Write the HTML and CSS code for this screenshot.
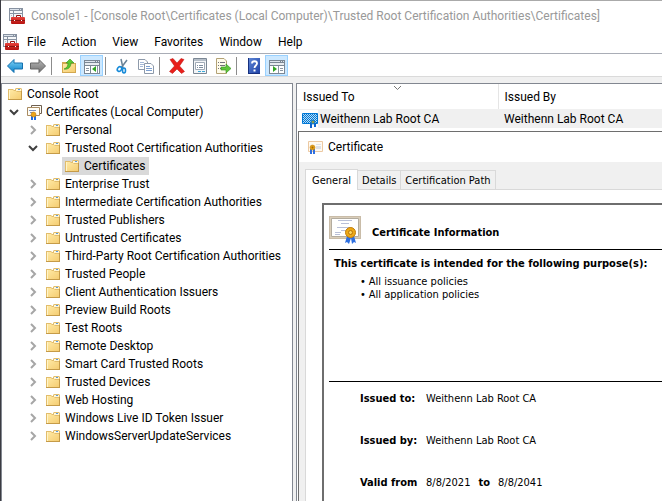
FILE: index.html
```html
<!DOCTYPE html>
<html lang="en">
<head>
    <meta charset="UTF-8">
    <meta name="viewport" content="width=device-width, initial-scale=1.0">
    <title>Console1</title>
    <link rel="stylesheet" href="styles.css">
</head>
<body>
    <!-- Shared icons -->
    <svg class="sprite" aria-hidden="true">
        <defs>
            <linearGradient id="folderFill" x1="0" y1="0" x2="1" y2="1">
                <stop offset="0" stop-color="#ffeaa6"/><stop offset="1" stop-color="#f5cd72"/>
            </linearGradient>
            <linearGradient id="blueFill" x1="0" y1="0" x2="0" y2="1">
                <stop offset="0" stop-color="#7fd4f8"/><stop offset="1" stop-color="#0a7fc8"/>
            </linearGradient>
            <linearGradient id="grayFill" x1="0" y1="0" x2="0" y2="1">
                <stop offset="0" stop-color="#b8b8b8"/><stop offset="1" stop-color="#707070"/>
            </linearGradient>
            <linearGradient id="redFill" x1="0" y1="0" x2="0" y2="1">
                <stop offset="0" stop-color="#e8413a"/><stop offset="1" stop-color="#b4120f"/>
            </linearGradient>
            <linearGradient id="helpFill" x1="0" y1="0" x2="1" y2="1">
                <stop offset="0" stop-color="#6088d8"/><stop offset="1" stop-color="#1c3fa4"/>
            </linearGradient>
            <pattern id="dither" width="2" height="2" patternUnits="userSpaceOnUse">
                <path fill="#b9dcf4" d="M0 0h2v2H0z"/><path fill="#0078d7" d="M0 0h1v1H0zM1 1h1v1H1z"/>
            </pattern>
        </defs>
        <symbol id="folder" viewBox="0 0 16 16">
            <path fill="#e2bd6c" d="M1 3h5l1 1h1V3l1-1h5l1 1v11H1z"/>
            <path fill="#fff6d6" d="M9 3h5v2H9z"/>
            <path fill="#5b9bdc" d="M11 3h2v1h-2z"/>
            <path fill="url(#folderFill)" d="M2 4h4l1 1h2l1 1h4v7H2z"/>
            <path fill="#fff4c8" d="M2 4h1v9H2z"/>
            <path fill="#c59b48" d="M1 13h14v1H1zM14 5h1v9h-1z"/>
        </symbol>
        <symbol id="chevron-right" viewBox="0 0 10 10">
            <path fill="none" stroke="#a6a6a6" stroke-width="2" d="M3 1l4 4-4 4"/>
        </symbol>
        <symbol id="chevron-down" viewBox="0 0 10 10">
            <path fill="none" stroke="#404040" stroke-width="2" d="M1 3l4 4 4-4"/>
        </symbol>
        <symbol id="console" viewBox="0 0 16 16">
            <path fill="#8792a1" d="M0 0h14v13H0z"/>
            <path fill="#dce3eb" d="M1 1h9v1H1zM11 1h1v1h-1z"/>
            <path fill="#f4f6f8" d="M1 3h12v9H1z"/>
            <path fill="#8792a1" d="M4 3h1v9H4zM1 5h12v1H1z"/>
            <path fill="#b7c0cb" d="M2 7h1v1H2zM2 9h1v1H2z"/>
            <path fill="none" stroke="#8e1512" d="M7.500 9V7.500h4V9"/>
            <rect x="2" y="9" width="14" height="7" rx="1" fill="url(#redFill)"/>
            <path fill="#8e1512" d="M2 12h14v1H2z"/>
            <path fill="#fff" d="M5 12h1v1H5zM12 12h1v1h-1z"/>
        </symbol>
        <symbol id="certs" viewBox="0 0 16 16">
            <path fill="#fffdf6" stroke="#6e5f50" d="M5.500 1.500h10v8h-10z"/>
            <path fill="#fffdf6" stroke="#a98b62" d="M1.500 3.500h12v8h-12z"/>
            <path fill="#7f92c0" d="M3 6h7v1H3zM4 8h4v1H4z"/>
            <path fill="#1f6be0" d="M5 12h2v4H5zM8 12h2v4H8z"/>
            <circle cx="7.500" cy="10.500" r="2.500" fill="#eba51c" stroke="#b87508" stroke-width=".5"/>
        </symbol>
        <symbol id="cert-small" viewBox="0 0 16 16">
            <path fill="#fffaf2" stroke="#ecc9a2" d="M1.500 2.500h14v10h-14z"/>
            <path fill="#dde1e8" d="M9 5h5v1H9zM9 7h5v3H9z"/>
            <path fill="#2f6fe0" d="M3 10h2v5H3zM6 10h2v5H6z"/>
            <circle cx="5.500" cy="8.500" r="2.500" fill="#e3a21a" stroke="#bb7a08" stroke-width=".5"/>
            <circle cx="5.500" cy="8.500" r="1" fill="#a96a05"/>
        </symbol>
        <symbol id="cert-selected" viewBox="0 0 16 16">
            <path fill="url(#dither)" stroke="#0078d7" d="M.5 1.500h15v10H.5z"/>
            <path fill="#0a63cf" d="M8 11h2v5H8zM12 11h2v4h-2z"/>
            <circle cx="11" cy="10" r="2" fill="#8c9a4c" stroke="#0078d7"/>
        </symbol>
        <symbol id="arrow" viewBox="0 0 16 16">
            <path stroke-width="1" stroke-linejoin="round" d="M.500 8L7 1.500V5h8.500v6H7v3.500z"/>
        </symbol>
        <symbol id="pane" viewBox="0 0 16 14">
            <path fill="#7b8794" d="M0 0h16v14H0z"/>
            <path fill="#dfe6ee" d="M1 1h10v1H1zM12 1h1v1h-1zM14 1h1v1h-1z"/>
            <path fill="#e7ebef" d="M1 3h14v2H1z"/>
            <path fill="#fff" d="M1 6h5v7H1zM7 6h8v7H7z"/>
        </symbol>
    </svg>

    <div class="window">
        <header class="title-bar">
            <svg class="icon"><use href="#console"/></svg>
            <h1>Console1 - [Console Root\Certificates (Local Computer)\Trusted Root Certification Authorities\Certificates]</h1>
        </header>

        <nav class="menu-bar">
            <svg class="icon"><use href="#console"/></svg>
            <button>File</button>
            <button>Action</button>
            <button>View</button>
            <button>Favorites</button>
            <button>Window</button>
            <button>Help</button>
        </nav>

        <div class="toolbar">
            <button aria-label="Back"><svg class="icon" fill="url(#blueFill)" stroke="#1470ae"><use href="#arrow"/></svg></button>
            <button aria-label="Forward"><svg class="icon flip" fill="url(#grayFill)" stroke="#666"><use href="#arrow"/></svg></button>
            <span class="separator"></span>
            <button aria-label="Up one level">
                <svg class="icon" viewBox="0 0 16 16">
                    <path fill="#d3a850" d="M1 4h5l1 1h8v10H1z"/>
                    <path fill="url(#folderFill)" d="M2 6h12v8H2z"/>
                    <path fill="#5cc832" stroke="#2f8f1c" stroke-width=".6" d="M3 11c3-1 4-3 4-6H5l4-4 4 4h-3c0 4-3 7-7 6z"/>
                </svg>
            </button>
            <button class="active" aria-label="Show console tree" aria-pressed="true">
                <svg class="icon" viewBox="0 0 16 16">
                    <use href="#pane" y="2" width="16" height="14"/>
                    <path fill="#8b96a3" d="M2 10h3v1H2zM2 12h3v1H2zM13 8h1v7h-1z"/>
                    <path fill="#30a423" d="M12 8v6l-4-3z"/>
                </svg>
            </button>
            <span class="separator"></span>
            <button aria-label="Cut">
                <svg class="icon" viewBox="0 0 16 16">
                    <path fill="none" stroke="#698296" stroke-width="1.500" d="M6 1l2 9M12 2l-6 8"/>
                    <ellipse cx="4.500" cy="11" rx="2" ry="2.500" fill="none" stroke="#168ad8" stroke-width="1.600" transform="rotate(35 4.500 11)"/>
                    <ellipse cx="9" cy="12.500" rx="1.500" ry="2.500" fill="none" stroke="#168ad8" stroke-width="1.600"/>
                </svg>
            </button>
            <button aria-label="Copy">
                <svg class="icon" viewBox="0 0 16 16">
                    <path fill="#fff" stroke="#8e9aaa" d="M.5 1.500H7L9.500 4v7.500H.5z"/>
                    <path stroke="#a5b9d8" d="M2 4.500h4M2 6.500h4M2 8.500h3"/>
                    <path fill="#fff" stroke="#8e9aaa" d="M6.500 5.500H13l2.500 2.500v7.500h-9z"/>
                    <path fill="none" stroke="#7da0d0" d="M8 8.500h4M8 10.500h6M8 12.500h6"/>
                </svg>
            </button>
            <span class="separator"></span>
            <button aria-label="Delete">
                <svg class="icon" viewBox="0 0 16 16">
                    <path fill="#e81f1b" stroke="#b8100d" stroke-width=".5" d="M1 1.500l3-1 4 4.500 4-4.500 3 1L10.500 8l5 5.500-3 2L8 11l-4.500 4.500-3-2L5.500 8z"/>
                </svg>
            </button>
            <button aria-label="Properties">
                <svg class="icon" viewBox="0 0 16 16">
                    <path fill="#f3f5f7" stroke="#7b8794" d="M1.500 .5h13v15h-13z"/>
                    <path fill="#b5bec8" d="M2 1h12v2H2z"/>
                    <path fill="#fff" stroke="#a0aab6" d="M3.500 4.500h9v7h-9z"/>
                    <path stroke="#7d8d9f" d="M5 7.500h1M7 7.500h4M5 9.500h1M7 9.500h4"/>
                    <path stroke="#3ca8d8" d="M6 13.500h3M10 13.500h3"/>
                </svg>
            </button>
            <button aria-label="Export list">
                <svg class="icon" viewBox="0 0 16 16">
                    <path fill="#fffbea" stroke="#b3a276" d="M1.500 .5H9L11.500 3v12.500h-10z"/>
                    <path stroke="#75737a" stroke-dasharray="1 1 5" d="M3 4.500h7M3 7.500h7M3 10.500h7"/>
                    <path fill="#60c53a" stroke="#34911d" stroke-width=".6" d="M6 9h5V6l5 4.500-5 4.500V12H6z"/>
                </svg>
            </button>
            <span class="separator"></span>
            <button aria-label="Help">
                <svg class="icon" viewBox="0 0 16 16">
                    <path fill="url(#helpFill)" d="M2 0h12v16H2z"/>
                    <path fill="#16307f" d="M2 0h1v16H2zM3 15h11v1H3z"/>
                    <path fill="none" stroke="#fff" stroke-width="1.800" d="M6 5.500C6 2.500 11 2.500 11 5.500c0 2-2.500 2-2.500 4.500"/>
                    <path fill="#fff" d="M7.500 11.500h2v2h-2z"/>
                </svg>
            </button>
            <button class="active" aria-label="Show action pane" aria-pressed="true">
                <svg class="icon" viewBox="0 0 16 16">
                    <use href="#pane" y="2" width="16" height="14"/>
                    <path fill="#fff" d="M6 8h3v7H6z"/>
                    <path fill="#8b96a3" d="M9 8h1v7H9zM11 10h3v1h-3zM11 12h3v1h-3z"/>
                    <path fill="#30a423" d="M4 8v6l4-3z"/>
                </svg>
            </button>
        </div>

        <main class="panes">
            <section class="tree-pane">
                <ul class="tree">
                    <li>
                        <div class="node"><svg class="icon"><use href="#folder"/></svg><span class="label">Console Root</span></div>
                        <ul>
                            <li>
                                <div class="node"><button class="expander" aria-label="Collapse"><svg><use href="#chevron-down"/></svg></button><svg class="icon"><use href="#certs"/></svg><span class="label">Certificates (Local Computer)</span></div>
                                <ul>
                                    <li><div class="node"><button class="expander" aria-label="Expand"><svg><use href="#chevron-right"/></svg></button><svg class="icon"><use href="#folder"/></svg><span class="label">Personal</span></div></li>
                                    <li>
                                        <div class="node"><button class="expander" aria-label="Collapse"><svg><use href="#chevron-down"/></svg></button><svg class="icon"><use href="#folder"/></svg><span class="label">Trusted Root Certification Authorities</span></div>
                                        <ul>
                                            <li class="leaf"><div class="node selected"><svg class="icon"><use href="#folder"/></svg><span class="label">Certificates</span></div></li>
                                        </ul>
                                    </li>
                                    <li><div class="node"><button class="expander" aria-label="Expand"><svg><use href="#chevron-right"/></svg></button><svg class="icon"><use href="#folder"/></svg><span class="label">Enterprise Trust</span></div></li>
                                    <li><div class="node"><button class="expander" aria-label="Expand"><svg><use href="#chevron-right"/></svg></button><svg class="icon"><use href="#folder"/></svg><span class="label">Intermediate Certification Authorities</span></div></li>
                                    <li><div class="node"><button class="expander" aria-label="Expand"><svg><use href="#chevron-right"/></svg></button><svg class="icon"><use href="#folder"/></svg><span class="label">Trusted Publishers</span></div></li>
                                    <li><div class="node"><button class="expander" aria-label="Expand"><svg><use href="#chevron-right"/></svg></button><svg class="icon"><use href="#folder"/></svg><span class="label">Untrusted Certificates</span></div></li>
                                    <li><div class="node"><button class="expander" aria-label="Expand"><svg><use href="#chevron-right"/></svg></button><svg class="icon"><use href="#folder"/></svg><span class="label">Third-Party Root Certification Authorities</span></div></li>
                                    <li><div class="node"><button class="expander" aria-label="Expand"><svg><use href="#chevron-right"/></svg></button><svg class="icon"><use href="#folder"/></svg><span class="label">Trusted People</span></div></li>
                                    <li><div class="node"><button class="expander" aria-label="Expand"><svg><use href="#chevron-right"/></svg></button><svg class="icon"><use href="#folder"/></svg><span class="label">Client Authentication Issuers</span></div></li>
                                    <li><div class="node"><button class="expander" aria-label="Expand"><svg><use href="#chevron-right"/></svg></button><svg class="icon"><use href="#folder"/></svg><span class="label">Preview Build Roots</span></div></li>
                                    <li><div class="node"><button class="expander" aria-label="Expand"><svg><use href="#chevron-right"/></svg></button><svg class="icon"><use href="#folder"/></svg><span class="label">Test Roots</span></div></li>
                                    <li><div class="node"><button class="expander" aria-label="Expand"><svg><use href="#chevron-right"/></svg></button><svg class="icon"><use href="#folder"/></svg><span class="label">Remote Desktop</span></div></li>
                                    <li><div class="node"><button class="expander" aria-label="Expand"><svg><use href="#chevron-right"/></svg></button><svg class="icon"><use href="#folder"/></svg><span class="label">Smart Card Trusted Roots</span></div></li>
                                    <li><div class="node"><button class="expander" aria-label="Expand"><svg><use href="#chevron-right"/></svg></button><svg class="icon"><use href="#folder"/></svg><span class="label">Trusted Devices</span></div></li>
                                    <li><div class="node"><button class="expander" aria-label="Expand"><svg><use href="#chevron-right"/></svg></button><svg class="icon"><use href="#folder"/></svg><span class="label">Web Hosting</span></div></li>
                                    <li><div class="node"><button class="expander" aria-label="Expand"><svg><use href="#chevron-right"/></svg></button><svg class="icon"><use href="#folder"/></svg><span class="label">Windows Live ID Token Issuer</span></div></li>
                                    <li><div class="node"><button class="expander" aria-label="Expand"><svg><use href="#chevron-right"/></svg></button><svg class="icon"><use href="#folder"/></svg><span class="label">WindowsServerUpdateServices</span></div></li>
                                </ul>
                            </li>
                        </ul>
                    </li>
                </ul>
            </section>

            <section class="list-pane">
                <table class="cert-list">
                    <thead>
                        <tr>
                            <th class="sorted">
                                <svg class="sort-mark" viewBox="0 0 7 4"><path fill="none" stroke="#777" d="M0 0l3.500 3.500L7 0"/></svg>
                                Issued To
                            </th>
                            <th>Issued By</th>
                        </tr>
                    </thead>
                    <tbody>
                        <tr>
                            <td class="name"><div class="cell"><svg class="icon"><use href="#cert-selected"/></svg><span>Weithenn Lab Root CA</span></div></td>
                            <td>Weithenn Lab Root CA</td>
                        </tr>
                    </tbody>
                </table>

                <section class="dialog">
                    <header class="dialog-title">
                        <svg class="icon"><use href="#cert-small"/></svg>
                        <h2>Certificate</h2>
                    </header>
                    <div class="dialog-body">
                        <div class="tabs" role="tablist">
                            <button class="tab current" role="tab" aria-selected="true">General</button>
                            <button class="tab" role="tab">Details</button>
                            <button class="tab" role="tab">Certification Path</button>
                        </div>
                        <div class="tab-page">
                            <div class="cert-info">
                                <div class="cert-heading">
                                    <svg class="cert-icon" viewBox="0 0 32 29">
                                        <path fill="#d9cdb9" d="M0 1h32v23H0z"/>
                                        <path fill="none" stroke="#b8ab97" stroke-dasharray="1 1" d="M.5 1.500h31v22H.5z"/>
                                        <path fill="#fff" stroke="#b3ac9f" d="M2.500 3.500h27v18h-27z"/>
                                        <path stroke="#b9c0d8" d="M9 5.500h14M12 8.500h8M8 12.500h14M12 15.500h5M6 17.500h6M6 19.500h5"/>
                                        <path fill="#2c6ee0" d="M18 21l4 2-2 6-2-2-2 1zM22 23l3-2 2 7-2-1-2 2z"/>
                                        <circle cx="21.500" cy="17.500" r="5" fill="#eca817" stroke="#c27d08"/>
                                        <circle cx="21.500" cy="17.500" r="2" fill="#f9d463" stroke="#b97406"/>
                                    </svg>
                                    <h3>Certificate Information</h3>
                                </div>
                                <div class="purposes">
                                    <h4>This certificate is intended for the following purpose(s):</h4>
                                    <ul>
                                        <li>All issuance policies</li>
                                        <li>All application policies</li>
                                    </ul>
                                </div>
                                <div class="details">
                                    <p><b>Issued to:</b><span>Weithenn Lab Root CA</span></p>
                                    <p><b>Issued by:</b><span>Weithenn Lab Root CA</span></p>
                                    <p class="validity"><b>Valid from</b><span>8/8/2021</span><b>to</b><span>8/8/2041</span></p>
                                </div>
                            </div>
                        </div>
                    </div>
                </section>
            </section>
        </main>
    </div>
</body>
</html>
```

FILE: styles.css
```css
* {
    box-sizing: border-box;
}

body {
    margin: 0;
    padding-left: 1px;
    background-color: #3b3b42;
    font-family: "Segoe UI", Roboto, "Open Sans", sans-serif;
    font-size: 12px;
    line-height: 18px;
    color: #000;
}

h1, h2, h3, h4, p, ul {
    margin: 0;
    padding: 0;
    font-size: inherit;
    font-weight: normal;
}

ul {
    list-style: none;
}

button {
    margin: 0;
    padding: 0;
    border: none;
    background: none;
    font: inherit;
    color: inherit;
}

.sprite {
    display: block;
    width: 0;
    height: 0;
}

.icon {
    display: block;
    flex: none;
    width: 16px;
    height: 16px;
}

.flip {
    transform: scaleX(-1);
}

.window {
    display: flex;
    flex-direction: column;
    height: 100vh;
    overflow: hidden;
    border-top: 1px solid #aaa;
    background-color: #f0f0f0;
    white-space: nowrap;
}

.title-bar {
    display: flex;
    align-items: center;
    gap: 6px;
    height: 29px;
    padding-left: 8px;
    background-color: #fff;
    color: #999;
}

.menu-bar {
    display: flex;
    align-items: center;
    height: 24px;
    padding-left: 2px;
    border-bottom: 1px solid #a9adb6;
    background-color: #fff;
}

.menu-bar button {
    padding: 0 8px;
}

.toolbar {
    display: flex;
    height: 23px;
    padding: 1px 0 0 2px;
    border-bottom: 1px solid #dadada;
    background-color: #fff;
}

.toolbar button {
    display: flex;
    align-items: center;
    justify-content: center;
    width: 23px;
    height: 21px;
}

.toolbar .active {
    border: 1px solid #99d1ff;
    background-color: #cce8ff;
}

.separator {
    width: 1px;
    margin: 2px 5px 1px 2px;
    background-color: #8c8c8c;
}

.panes {
    display: grid;
    grid-template-columns: 292px 1fr;
    gap: 3px;
    flex: 1;
    min-height: 0;
    padding-top: 6px;
}

.tree-pane,
.list-pane {
    min-width: 0;
    overflow: hidden;
    border: 1px solid #828790;
    border-bottom: none;
    background-color: #fff;
}

.list-pane {
    display: flex;
    flex-direction: column;
    border-right: none;
}

.tree {
    padding: 1px 0 0 5px;
}

.tree ul ul {
    padding-left: 19px;
}

.node {
    display: flex;
    align-items: center;
    height: 18px;
}

.expander {
    display: flex;
    flex: none;
    align-items: center;
    width: 19px;
    height: 18px;
    padding-left: 2px;
}

.expander svg {
    width: 10px;
    height: 10px;
}

.leaf {
    padding-left: 17px;
}

.selected {
    width: fit-content;
    padding-left: 2px;
    background-color: #d9d9d9;
}

.label {
    padding: 0 4px;
}

.cert-list {
    width: 100%;
    table-layout: fixed;
    border-collapse: collapse;
}

.cert-list th,
.cert-list td {
    padding: 0 6px;
    font-weight: normal;
    text-align: left;
}

.cert-list th {
    height: 25px;
}

.cert-list td {
    height: 19px;
    background-color: #f0f0f0;
}

.cert-list .sorted {
    position: relative;
    width: 201px;
    border-right: 1px solid #e5e5e5;
}

.sort-mark {
    position: absolute;
    top: 2px;
    left: 97px;
    width: 7px;
    height: 4px;
}

.cert-list .name {
    padding: 0;
}

.cell {
    display: flex;
    background-color: #fff;
}

.cell .icon {
    margin: 2px 0 0 5px;
}

.cell span {
    flex: 1;
    padding: 0 2px;
    background-color: #f0f0f0;
}

.dialog {
    display: flex;
    flex-direction: column;
    flex: 1;
    margin: 3px 0 0 1px;
    border: 1px solid #6e6e6e;
    border-width: 1px 0 0 1px;
    background-color: #f0f0f0;
}

.dialog-title {
    display: flex;
    align-items: center;
    gap: 5px;
    height: 30px;
    padding-left: 8px;
    background-color: #fff;
}

.dialog-body {
    display: flex;
    flex-direction: column;
    flex: 1;
    padding: 7px 0 0 6px;
    font-family: Tahoma, "DejaVu Sans Condensed", "DejaVu Sans", sans-serif;
    font-size: 11px;
    line-height: 13px;
}

.tabs {
    display: flex;
    align-items: flex-end;
}

.tab {
    height: 19px;
    padding: 0 4px;
    border: 1px solid #d9d9d9;
    border-width: 1px 1px 0 0;
}

.tab.current {
    height: 21px;
    margin-bottom: -1px;
    padding: 0 6px;
    border-left-width: 1px;
    background-color: #fff;
    z-index: 1;
}

.tab-page {
    display: flex;
    flex: 1;
    padding: 13px 0 0 16px;
    border: 1px solid #d9d9d9;
    border-width: 1px 0 0 1px;
    background-color: #fff;
}

.cert-info {
    flex: 1;
    padding: 10px 0 0 5px;
    border: 2px solid #6e6e6e;
    border-width: 2px 0 0 2px;
}

.cert-heading {
    display: flex;
    align-items: center;
    gap: 11px;
    height: 35px;
    border-bottom: 1px solid #000;
    font-weight: bold;
}

.cert-heading h3,
.purposes h4 {
    font-weight: bold;
}

.cert-icon {
    flex: none;
    align-self: flex-start;
    width: 32px;
    height: 29px;
}

.purposes {
    height: 132px;
    padding: 7px 0 0 5px;
    border-bottom: 1px solid #000;
}

.purposes ul {
    padding: 5px 0 0 26px;
}

.purposes li::before {
    content: "•";
    margin-right: 3px;
}

.details {
    display: flex;
    flex-direction: column;
    gap: 29px;
    padding: 10px 0 0 31px;
}

.details p {
    display: flex;
    gap: 8px;
}

.details b:first-child {
    min-width: 58px;
}
```
